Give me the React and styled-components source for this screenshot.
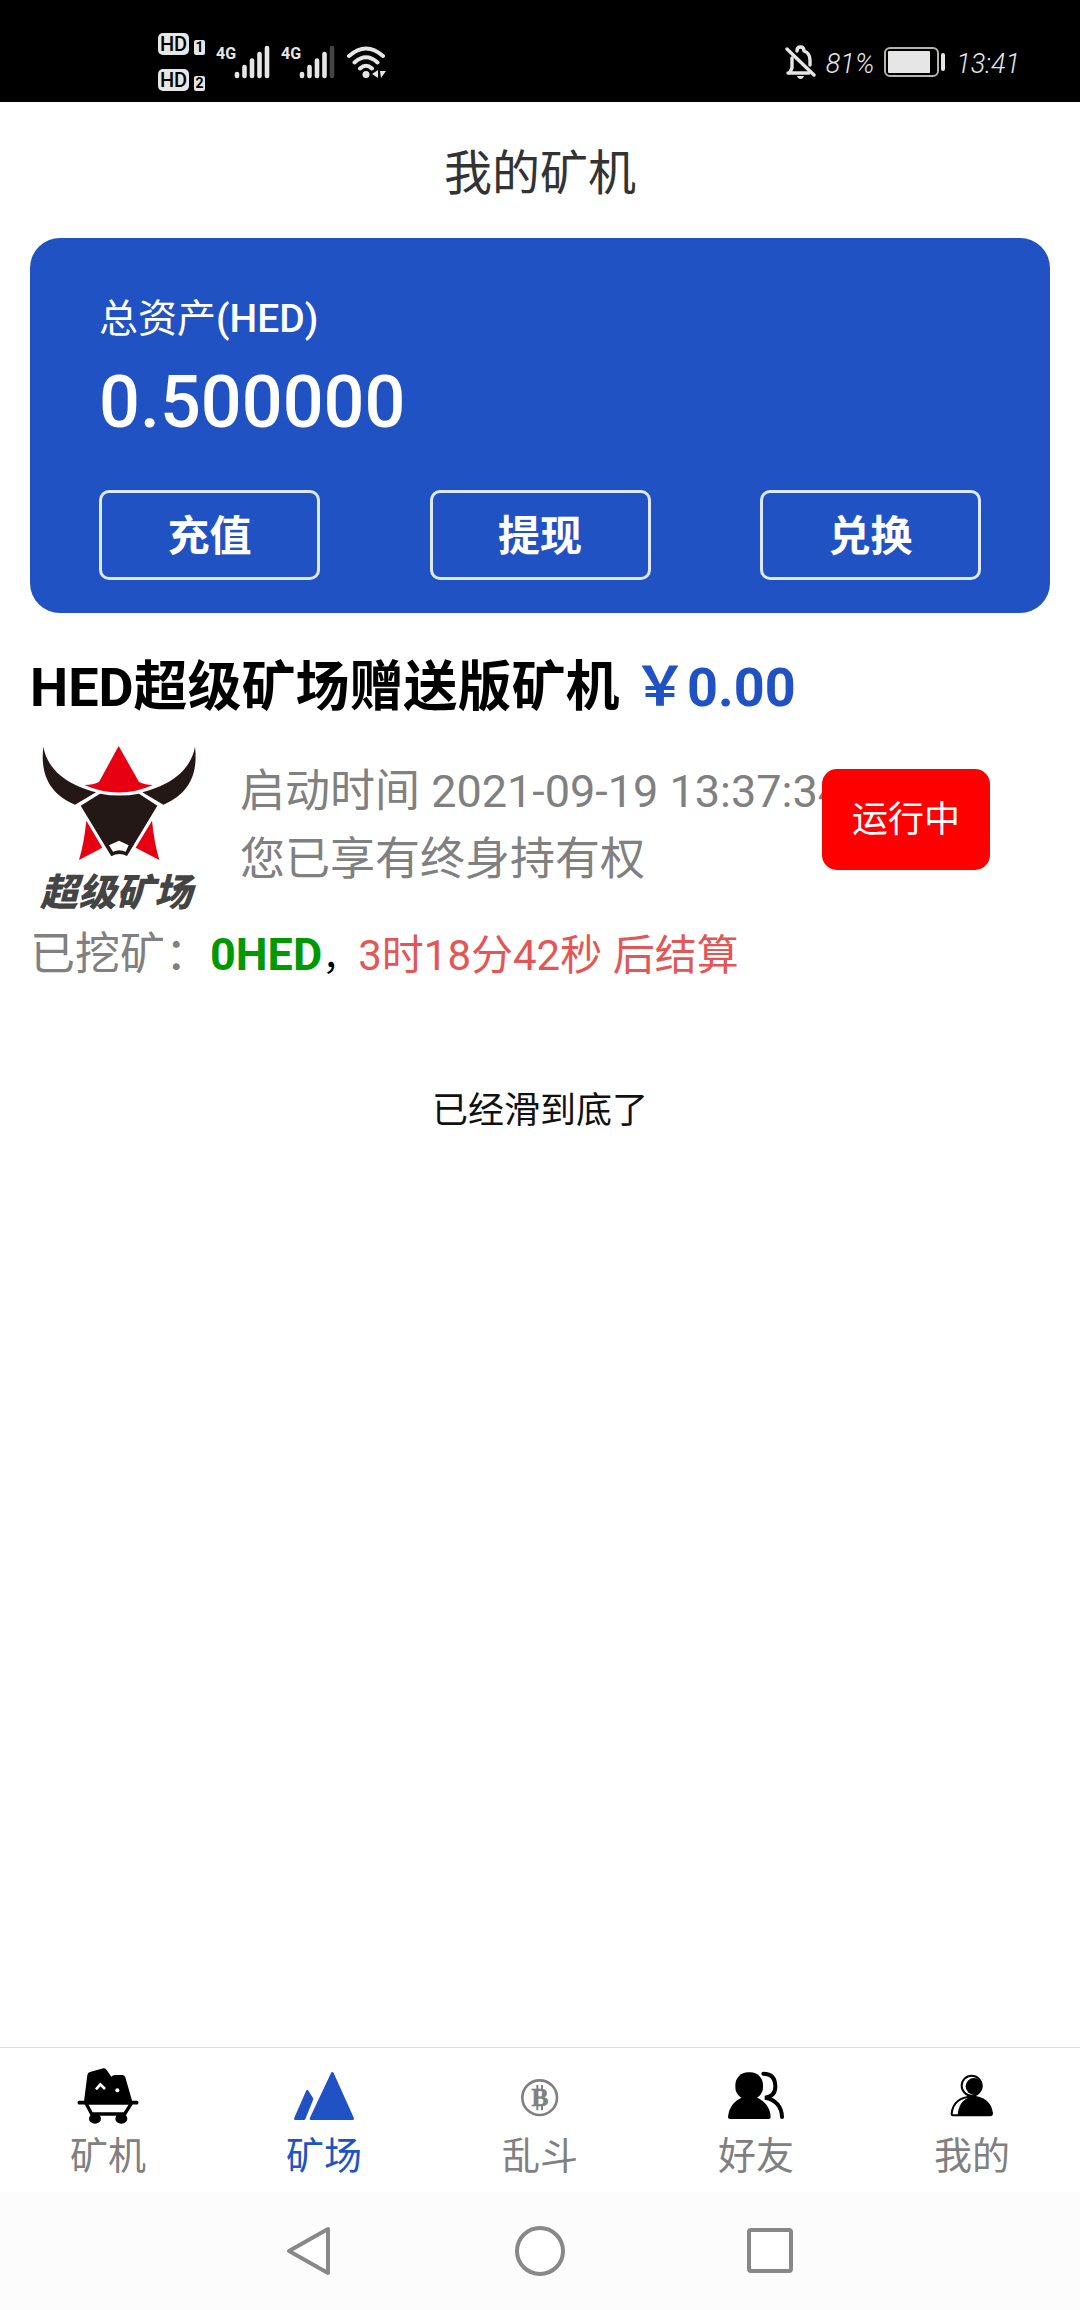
import React from 'react';
import styled, { createGlobalStyle } from 'styled-components';

const GlobalStyle = createGlobalStyle`
  * {
    box-sizing: border-box;
  }

  body {
    margin: 0;
    background-color: #fff;
    font-family: Roboto, "Noto Sans CJK SC", sans-serif;
  }

  h1, h2, p, figure {
    margin: 0;
    font-weight: 400;
  }

  button {
    font-family: inherit;
    cursor: pointer;
  }

  svg {
    display: block;
  }
`;

const Page = styled.div`
  min-height: 100vh;
  display: flex;
  flex-direction: column;
`;

/* status bar */

const StatusBar = styled.header`
  height: 102px;
  padding: 22px 60px 0 158px;
  background-color: #000;
  color: #e6e6e6;
  display: flex;
  justify-content: space-between;
  align-items: center;
`;

const StatusGroup = styled.div`
  display: flex;
  align-items: center;
  gap: ${(props) => props.$gap}px;
`;

const HdStack = styled.div`
  display: flex;
  flex-direction: column;
  gap: 14px;
`;

const HdRow = styled.div`
  display: flex;
  align-items: flex-end;
  gap: 5px;
`;

const HdBadge = styled.span`
  width: 31px;
  height: 22px;
  border-radius: 5px;
  background-color: #e6e6e6;
  color: #000;
  font-size: 20px;
  font-weight: 500;
  line-height: 22px;
  text-align: center;
`;

const SimBadge = styled.span`
  width: 11px;
  height: 15px;
  border-radius: 2px;
  background-color: #e6e6e6;
  color: #000;
  font-size: 14px;
  font-weight: 700;
  line-height: 15px;
  text-align: center;
`;

const Signal = styled.div`
  display: flex;
  align-items: flex-start;
`;

const Network = styled.span`
  width: 18px;
  font-family: "Liberation Sans Narrow", Roboto, sans-serif;
  font-size: 16px;
  font-weight: 700;
  line-height: 18px;
`;

const StatusText = styled.span`
  padding-top: 4px;
  font-size: 27px;
  font-weight: 300;
  font-style: italic;
  line-height: 34px;
`;

/* asset card */

const Title = styled.h1`
  padding: 36px 0 28px;
  font-size: 48px;
  line-height: 72px;
  text-align: center;
  color: #333;
`;

const AssetCard = styled.section`
  margin: 0 30px;
  padding: 54px 69px 33px;
  border-radius: 30px;
  background-color: #2152c4;
  color: #fff;
`;

const AssetLabel = styled.p`
  font-size: 39px;
  line-height: 54px;

  span {
    font-weight: 500;
  }
`;

const AssetValue = styled.p`
  padding-top: 3px;
  font-size: 72px;
  font-weight: 500;
  line-height: 108px;
`;

const Actions = styled.div`
  margin-top: 33px;
  display: flex;
  justify-content: space-between;
`;

const ActionButton = styled.button`
  width: 221px;
  height: 90px;
  padding: 0 0 5px;
  border: 3px solid #dce9ff;
  border-radius: 10px;
  background: none;
  color: #fff;
  font-size: 42px;
  font-weight: 700;
`;

/* machine */

const Machine = styled.article`
  padding: 39px 30px 0;
`;

const MachineName = styled.h2`
  font-size: 54px;
  font-weight: 700;
  line-height: 72px;
  color: #000;
`;

const Price = styled.span`
  color: #2152c4;
`;

const MachineRow = styled.div`
  padding: 20px 60px 0 10px;
  display: flex;
  align-items: flex-start;
`;

const Logo = styled.figure`
  flex: none;
  width: 200px;
`;

const LogoName = styled.figcaption`
  padding-top: 5px;
  font-size: 38px;
  font-style: italic;
  font-weight: 900;
  line-height: 54px;
  color: #444;
`;

const Info = styled.div`
  flex: 1;
  min-width: 0;
  padding-top: 14px;
  font-size: 45px;
  line-height: 68px;
  white-space: nowrap;
  color: #808080;
`;

const RunButton = styled.button`
  flex: none;
  position: relative;
  width: 168px;
  height: 101px;
  margin-top: 25px;
  padding: 0 0 8px;
  border: 0;
  border-radius: 15px;
  background-color: #f00;
  color: #fff;
  font-size: 36px;
`;

const Mined = styled.p`
  padding-top: 1px;
  font-size: 45px;
  line-height: 68px;
  color: #808080;
`;

const MinedAmount = styled.span`
  font-weight: 700;
  color: #009a00;
`;

const Comma = styled.span`
  font-size: 36px;
  color: #000;
`;

const Countdown = styled.span`
  font-size: 42px;
  color: #e45656;
`;

const ListEnd = styled.p`
  flex: 1;
  padding-top: 92px;
  font-size: 36px;
  line-height: 54px;
  text-align: center;
  color: #111;
`;

/* tab bar and system keys */

const TabBar = styled.nav`
  height: 145px;
  padding-top: 18px;
  border-top: 1px solid #ddd;
  display: flex;
`;

const Tab = styled.a`
  flex: 1;
  display: flex;
  flex-direction: column;
  align-items: center;
  gap: 3px;
  font-size: 38px;
  line-height: 54px;
  text-decoration: none;
  color: ${(props) => (props.$active ? '#2152c4' : '#808080')};
`;

const SystemKeys = styled.footer`
  height: 118px;
  background-color: #fcfcfc;
  display: flex;
  justify-content: center;
  gap: 178px;
`;

const SystemKey = styled.button`
  width: 52px;
  padding: 0;
  border: 0;
  background: none;
  display: flex;
  align-items: center;
`;

const SignalBars = ({ weak }) => (
  <svg width="36" height="34" viewBox="0 0 36 34" stroke="#e6e6e6" strokeWidth="4.6" strokeLinecap="round">
    <path d="M3 29V31M10.500 22V31M18 15.500V31M25.500 9V31" />
    <path d="M33 3V31" stroke={weak ? '#444' : '#e6e6e6'} />
  </svg>
);

const WifiIcon = () => (
  <svg width="40" height="34" viewBox="0 0 40 34" fill="none" stroke="#e6e6e6" strokeWidth="4" strokeLinecap="round">
    <path d="M3 11Q20 -4 37 11M8.500 17.500Q20 7 31.500 17.500M14 23.500Q20 18 26 23.500" />
    <circle cx="20" cy="29.500" r="3.500" fill="#e6e6e6" stroke="none" />
    <path d="M26 29L32 25V33ZM34 26L40 26L35 33Z" fill="#e6e6e6" stroke="none" />
  </svg>
);

const MutedBellIcon = () => (
  <svg width="31" height="35" viewBox="0 0 31 35" fill="none" stroke="#e6e6e6" strokeWidth="3.4" strokeLinecap="round" strokeLinejoin="round">
    <path d="M3 28H24M5 27L7 23V13M12 6Q12 2 15.500 2T19 6Q25 8 25 15V20" />
    <path d="M2 4L29 30" />
    <path d="M12 31H19Q18 34 15.500 34T12 31Z" fill="#e6e6e6" stroke="none" />
  </svg>
);

const BatteryIcon = () => (
  <svg width="62" height="30" viewBox="0 0 62 30">
    <rect x="1" y="1" width="53" height="28" rx="5" fill="none" stroke="#b4b4b0" strokeWidth="2" />
    <rect x="4" y="4" width="42" height="22" rx="1" fill="#e6e6e6" />
    <rect x="57" y="6" width="4" height="18" rx="2" fill="#e6e6e6" />
  </svg>
);

const BullLogo = () => (
  <svg width="158" height="117" viewBox="60 312 474 351">
    <g fill="#231815">
      <path d="M70 320C80 375 120 428 228 457L165 494C90 462 60 405 70 320Z" />
      <path d="M525 320C515 375 475 428 367 457L430 494C505 462 535 405 525 320Z" />
      <path d="M240 461Q298 472 357 461L412 497L321 648Q297 636 274 649L182 497Z" />
    </g>
    <g fill="#e60012">
      <path d="M296 318L357 426Q375 435 399 435Q297 480 193 435Q220 435 237 426Z" />
      <path d="M199 542L247 623L177 660Q192 610 199 542Z" />
      <path d="M396 542L347 623L418 660Q403 610 396 542Z" />
    </g>
    <path d="M267 616L297 602L326 616L317 635Q297 626 279 635Z" fill="#fff" />
  </svg>
);

const TabIcon = ({ x, children }) => (
  <svg width="64" height="60" viewBox={`${x} 108 192 180`}>{children}</svg>
);

const CartIcon = () => (
  <TabIcon x={108}>
    <path d="M132 215L142 135Q143 128 150 126L190 115Q196 114 200 120L214 140Q220 134 226 135H248Q254 136 256 142L277 215Z" />
    <path d="M118 218H290" stroke="#000" strokeWidth="11" strokeLinecap="round" />
    <path d="M138 220L155 252H254L274 220" fill="#fff" stroke="#000" strokeWidth="10" strokeLinejoin="round" />
    <path d="M134 219H276" stroke="#000" strokeWidth="10" />
    <ellipse cx="165" cy="266" rx="18" ry="15" />
    <ellipse cx="244" cy="266" rx="18" ry="15" />
    <path d="M168 178L181 163L195 177" fill="none" stroke="#fff" strokeWidth="8" />
    <circle cx="232" cy="181" r="6" fill="#fff" />
  </TabIcon>
);

const MountainIcon = () => (
  <TabIcon x={756}>
    <g fill="#2152c4" stroke="#2152c4" strokeWidth="8" strokeLinejoin="round">
      <path d="M877 130L938 266H813Z" />
      <path d="M802 184L816 207L792 266H766Z" />
    </g>
  </TabIcon>
);

const CoinIcon = () => (
  <TabIcon x={84}>
    <circle cx="179" cy="203" r="52" fill="none" stroke="#808080" strokeWidth="8" />
    <path d="M172 165V182M186 165V182M172 224V241M186 224V241" stroke="#808080" strokeWidth="6" />
    <text x="180" y="228" textAnchor="middle" fontFamily="Liberation Serif, serif" fontWeight="700" fontSize="76" fill="#808080" stroke="#808080" strokeWidth="2">B</text>
  </TabIcon>
);

const FriendsIcon = () => (
  <TabIcon x={732}>
    <rect x="766" y="127" width="83" height="82" rx="38" />
    <path d="M788 202H828C855 213 870 232 872 261Q872 267 866 267H750Q744 267 744 261C747 232 762 213 788 202Z" />
    <path d="M850 131C878 131 886 150 886 170C886 190 874 200 855 203C888 208 905 232 906 261" fill="none" stroke="#000" strokeWidth="12" strokeLinecap="round" />
  </TabIcon>
);

const MeIcon = () => (
  <TabIcon x={300}>
    <circle cx="395" cy="167" r="30" fill="#fff" stroke="#000" strokeWidth="6" />
    <circle cx="402" cy="169" r="25" />
    <path d="M340 256Q335 256 335 251C338 218 362 200 395 200C428 200 452 218 456 250Q456 256 450 256Z" fill="#fff" stroke="#000" strokeWidth="6" />
    <path d="M353 256C354 230 366 206 395 200C428 200 452 218 456 250V256Z" />
  </TabIcon>
);

const tabs = [
  { name: '矿机', icon: <CartIcon /> },
  { name: '矿场', icon: <MountainIcon />, active: true },
  { name: '乱斗', icon: <CoinIcon /> },
  { name: '好友', icon: <FriendsIcon /> },
  { name: '我的', icon: <MeIcon /> },
];

const keys = [
  { name: '返回', shape: <path d="M44 4V48L5 26Z" /> },
  { name: '主页', shape: <circle cx="26" cy="26" r="23" /> },
  { name: '最近', shape: <rect x="5" y="5" width="42" height="41" rx="2" /> },
];

const App = () => {
  return (
    <Page>
      <GlobalStyle />
      <StatusBar>
        <StatusGroup $gap={11}>
          <HdStack>
            <HdRow><HdBadge>HD</HdBadge><SimBadge>1</SimBadge></HdRow>
            <HdRow><HdBadge>HD</HdBadge><SimBadge>2</SimBadge></HdRow>
          </HdStack>
          <Signal><Network>4G</Network><SignalBars /></Signal>
          <Signal><Network>4G</Network><SignalBars weak /></Signal>
          <WifiIcon />
        </StatusGroup>
        <StatusGroup $gap={10}>
          <MutedBellIcon />
          <StatusText>81%</StatusText>
          <BatteryIcon />
          <StatusText>13:41</StatusText>
        </StatusGroup>
      </StatusBar>

      <Title>我的矿机</Title>

      <AssetCard>
        <AssetLabel>总资产<span>(HED)</span></AssetLabel>
        <AssetValue>0.500000</AssetValue>
        <Actions>
          <ActionButton>充值</ActionButton>
          <ActionButton>提现</ActionButton>
          <ActionButton>兑换</ActionButton>
        </Actions>
      </AssetCard>

      <Machine>
        <MachineName>HED超级矿场赠送版矿机 <Price>{'\uFFE5'}0.00</Price></MachineName>
        <MachineRow>
          <Logo>
            <BullLogo />
            <LogoName>超级矿场</LogoName>
          </Logo>
          <Info>
            <p>启动时间 2021-09-19 13:37:34</p>
            <p>您已享有终身持有权</p>
          </Info>
          <RunButton>运行中</RunButton>
        </MachineRow>
        <Mined>
          已挖矿{'\uFF1A'}<MinedAmount>0HED</MinedAmount><Comma>{'\uFF0C'}</Comma><Countdown>3时18分42秒 后结算</Countdown>
        </Mined>
      </Machine>

      <ListEnd>已经滑到底了</ListEnd>

      <TabBar>
        {tabs.map((tab) => (
          <Tab key={tab.name} href="#" $active={tab.active}>
            {tab.icon}
            {tab.name}
          </Tab>
        ))}
      </TabBar>

      <SystemKeys>
        {keys.map((key) => (
          <SystemKey key={key.name} aria-label={key.name}>
            <svg width="52" height="52" viewBox="0 0 52 52" fill="#fff" stroke="#888" strokeWidth="4" strokeLinejoin="round">
              {key.shape}
            </svg>
          </SystemKey>
        ))}
      </SystemKeys>
    </Page>
  );
};

export default App;
